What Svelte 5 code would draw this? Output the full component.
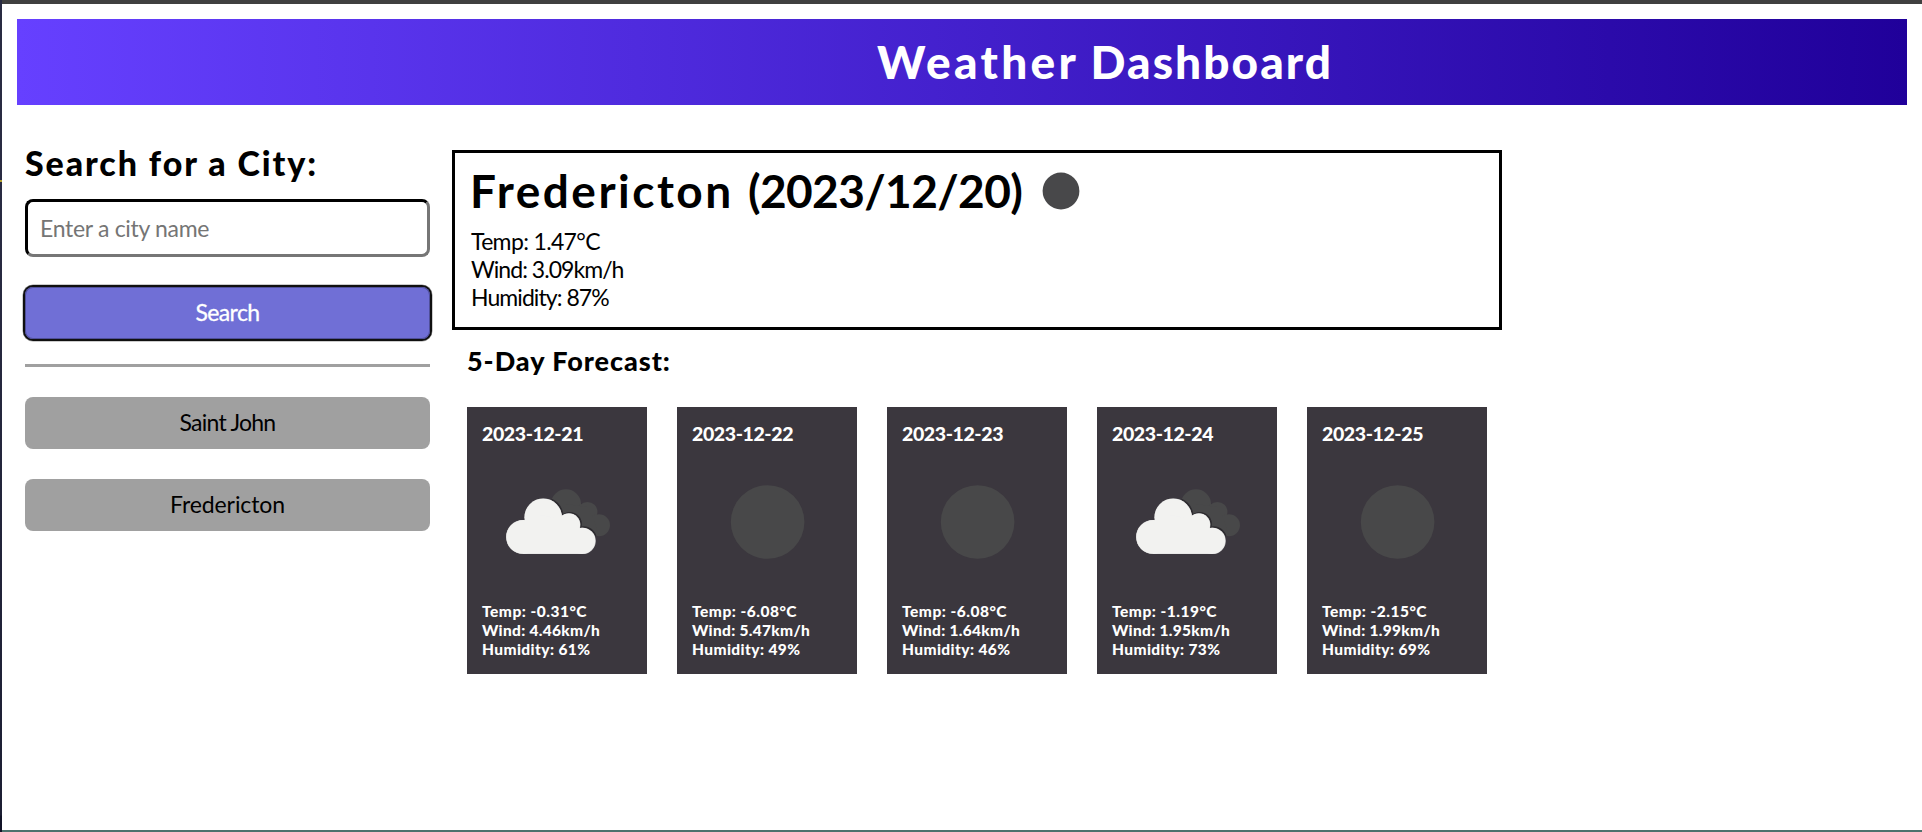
<script>
  const history = [
    { city: 'Saint John', track: -0.75 },
    { city: 'Fredericton', track: -0.1 }
  ];

  const current = [
    { text: 'Temp: 1.47°C', track: -0.65 },
    { text: 'Wind: 3.09km/h', track: -0.96 },
    { text: 'Humidity: 87%', track: -0.93 }
  ];

  const forecast = [
    { date: '2023-12-21', cloudy: true, temp: '-0.31', wind: '4.46', humidity: 61 },
    { date: '2023-12-22', cloudy: false, temp: '-6.08', wind: '5.47', humidity: 49 },
    { date: '2023-12-23', cloudy: false, temp: '-6.08', wind: '1.64', humidity: 46 },
    { date: '2023-12-24', cloudy: true, temp: '-1.19', wind: '1.95', humidity: 73 },
    { date: '2023-12-25', cloudy: false, temp: '-2.15', wind: '1.99', humidity: 69 }
  ];
</script>

{#snippet frontCloud()}
  <circle cx="41" cy="90" r="17" />
  <circle cx="61.2" cy="70.2" r="18.8" />
  <circle cx="87" cy="77.7" r="11.4" />
  <circle cx="100.5" cy="93.9" r="13.2" />
  <path d="M41 107V75L60 68L87 74L100.5 84V107Z" />
{/snippet}

{#snippet backCloud()}
  <circle cx="84" cy="57.4" r="15.1" />
  <circle cx="105.4" cy="65" r="10.1" />
  <circle cx="117" cy="78.3" r="11" />
  <path d="M84 57L105 60L112 74L117 89H100L75 70Z" />
{/snippet}

<div class="window">
  <div class="edge"></div>
  <div class="page">
    <header><h1><span class="first">Weather</span> <span class="second">Dashboard</span></h1></header>

    <div class="content">
      <aside>
        <h2>Search for a City:</h2>
        <input type="text" placeholder="Enter a city name" />
        <button class="search">Search</button>
        <hr />
        {#each history as item}
          <button class="city"><span style:letter-spacing="{item.track}px">{item.city}</span></button>
        {/each}
      </aside>

      <main>
        <section class="today">
          <h2>
            <span><span class="name">Fredericton</span> <span class="date">(2023/12/20)</span></span>
            <svg width="38" height="38" viewBox="0 0 38 38"><circle cx="19" cy="19" r="18.4" fill="#48484a" /></svg>
          </h2>
          {#each current as line}
            <p style:letter-spacing="{line.track}px">{line.text}</p>
          {/each}
        </section>

        <h3>5-Day Forecast:</h3>
        <div class="cards">
          {#each forecast as day}
            <article>
              <h4>{day.date}</h4>
              <svg width="150" height="150" viewBox="0 0 150 150">
                {#if day.cloudy}
                  <defs>
                    <clipPath id="back-{day.date}">{@render backCloud()}</clipPath>
                  </defs>
                  <g fill="#484849">{@render backCloud()}</g>
                  <g clip-path="url(#back-{day.date})">
                    <g fill="#252427" stroke="#2e2c30" stroke-width="1.4" transform="translate(.8 -.7)">{@render frontCloud()}</g>
                  </g>
                  <g fill="#c9c9ca">{@render frontCloud()}</g>
                  <g fill="#f2f2f0" transform="translate(.5 .7) scale(.992)">{@render frontCloud()}</g>
                {:else}
                  <circle cx="75.6" cy="75" r="36.8" fill="#484849" />
                {/if}
              </svg>
              <p class="temp">Temp: {day.temp}°C</p>
              <p class="wind">Wind: {day.wind}km/h</p>
              <p class="humidity">Humidity: {day.humidity}%</p>
            </article>
          {/each}
        </div>
      </main>
    </div>
  </div>
</div>

<style>
  :global(body) {
    background: #fff;
  }
  .window {
    box-sizing: border-box;
    display: flex;
    height: 832px;
    overflow: hidden;
    font-family: Lato, 'Gill Sans', sans-serif;
    color: #000;
  }
  .edge {
    flex: 0 0 2px;
    background: linear-gradient(#292b42 0 180px, #b3a030 180px 182px, #292b42 182px, #1c1e33 815px, #111327 816px);
  }
  .page {
    box-sizing: border-box;
    flex: 1;
    border-top: 4px solid #404040;
    border-bottom: 2px solid #4c726c;
    background: #fff;
  }
  h1, h2, h3, h4, p {
    margin: 0;
    white-space: nowrap;
  }
  header {
    box-sizing: border-box;
    height: 86px;
    margin: 15px 15px 0;
    padding: 15px 0 0 860px;
    background: linear-gradient(90deg, #6640ff, #20009a);
  }
  h1 {
    color: #fff;
    font-size: 46px;
    font-weight: 900;
    line-height: 56px;
    letter-spacing: 0.5px;
  }
  .first { letter-spacing: 3.3px; }
  .second { letter-spacing: 2.05px; }
  .content {
    display: flex;
    gap: 22px;
    padding-left: 23px;
  }
  aside {
    display: flex;
    flex-direction: column;
    width: 405px;
    padding-top: 38px;
  }
  aside h2 {
    margin-bottom: 16px;
    font-size: 34px;
    font-weight: 900;
    line-height: 40px;
    letter-spacing: 1.9px;
  }
  input {
    box-sizing: border-box;
    height: 58px;
    padding: 0 12px 1px;
    border: 3px inset #767676;
    border-color: #1f1f21 #767676 #767676 #1f1f21;
    border-radius: 8px;
    background: #fff;
    font: 23px Lato, sans-serif;
    letter-spacing: -0.3px;
  }
  input::placeholder {
    color: #757575;
  }
  button {
    box-sizing: border-box;
    height: 52px;
    margin-top: 30px;
    padding: 0 0 2px;
    border: 0;
    border-radius: 8px;
    font: 23px Lato, sans-serif;
  }
  .search {
    background: #706fd6;
    color: #fff;
    letter-spacing: -0.6px;
    -webkit-text-stroke: 0.3px #fff;
    box-shadow: inset 0 0 0 1px #4f4f99, 0 0 0 2px #101010, 0 0 0 2.5px #9a9a9a;
  }
  .city {
    background: #a0a0a0;
    color: #000;
  }
  hr {
    width: 100%;
    height: 3px;
    margin: 25px 0 0;
    border: 0;
    background: #a0a0a0;
  }
  main {
    width: 1050px;
    padding-top: 45px;
  }
  .today {
    box-sizing: border-box;
    height: 180px;
    padding: 10px 16px 0;
    border: 3px solid #000;
  }
  .today h2 {
    display: flex;
    align-items: center;
    gap: 20px;
    margin: 0 0 8px -1px;
    font-size: 46px;
    font-weight: 700;
    line-height: 56px;
    letter-spacing: 3px;
  }
  .name { letter-spacing: 2.5px; }
  .date { letter-spacing: -0.6px; }
  .today p {
    font-size: 23px;
    line-height: 28px;
  }
  h3 {
    margin: 15px 0 30px 15px;
    font-size: 27px;
    font-weight: 900;
    line-height: 32px;
    letter-spacing: 0.95px;
  }
  .cards {
    display: flex;
    gap: 30px;
    margin-left: 15px;
  }
  article {
    box-sizing: border-box;
    width: 180px;
    height: 267px;
    padding: 15px 15px 0;
    background: #3b373e;
    color: #fff;
  }
  h4 {
    font-size: 19.5px;
    font-weight: 900;
    line-height: 24px;
    letter-spacing: -0.4px;
  }
  article svg {
    display: block;
    margin: 1px 0 5px;
  }
  article p {
    font-size: 15.5px;
    font-weight: 900;
    line-height: 19px;
  }
  .temp { letter-spacing: 0.5px; }
  .wind { letter-spacing: 0.3px; }
  .humidity { letter-spacing: 0.4px; }
</style>
